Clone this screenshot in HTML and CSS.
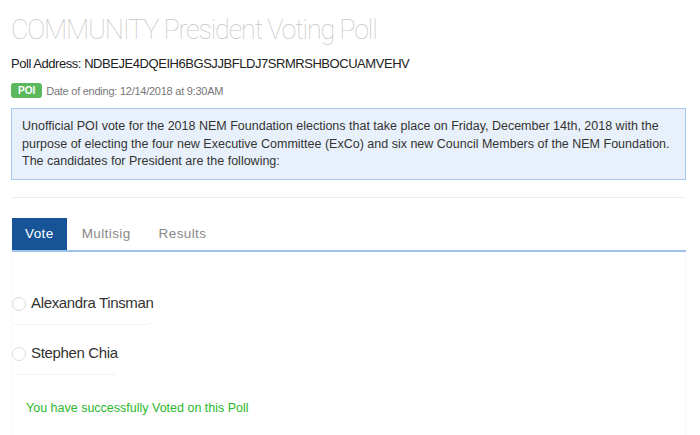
FILE: index.html
```html
<!DOCTYPE html>
<html>
<head>
<meta charset="utf-8">
<link rel="stylesheet" href="styles.css">
</head>
<body>
<div class="page">
  <h1 class="title">COMMUNITY President Voting Poll</h1>
  <p class="address">Poll Address: NDBEJE4DQEIH6BGSJJBFLDJ7SRMRSHBOCUAMVEHV</p>
  <div class="meta"><span class="badge">POI</span><span class="date">Date of ending: 12/14/2018 at 9:30AM</span></div>
  <div class="desc">Unofficial POI vote for the 2018 NEM Foundation elections that take place on Friday, December 14th, 2018 with the purpose of electing the four new Executive Committee (ExCo) and six new Council Members of the NEM Foundation. The candidates for President are the following:</div>
  <hr class="sep">
  <div class="tabs">
    <span class="tab active">Vote</span>
    <span class="tab">Multisig</span>
    <span class="tab">Results</span>
  </div>
  <div class="panel">
    <div class="options">
      <label class="option"><span class="radio"></span>Alexandra Tinsman</label>
      <label class="option"><span class="radio"></span>Stephen Chia</label>
    </div>
    <p class="success">You have successfully Voted on this Poll</p>
  </div>
</div>
</body>
</html>
```
FILE: styles.css
```css
* { box-sizing: border-box; }
html, body { margin: 0; padding: 0; background: #fff; }
body { font-family: "Liberation Sans", Arial, sans-serif; color: #333; }
.page { padding: 0 14px 0 11px; }
.title {
  margin: 0;
  padding-top: 12px;
  font-family: Roboto, "Liberation Sans", sans-serif;
  font-weight: 100;
  font-size: 27px;
  line-height: 36px;
  color: #c8c8c8;
  letter-spacing: -1.2px;
}
.address { margin: 8px 0 0; font-size: 13px; line-height: 16px; color: #222; letter-spacing: -0.45px; }
.meta { display: flex; align-items: center; margin-top: 11px; height: 15px; }
.badge {
  background: #5cb85c;
  color: #fff;
  font-weight: bold;
  font-size: 10px;
  line-height: 15px;
  padding: 0 7px;
  border-radius: 3px;
}
.date { margin-left: 4px; font-size: 11px; color: #777; letter-spacing: -0.25px; }
.desc {
  margin-top: 10px;
  background: #e8f1fb;
  border: 1px solid #a4c8f0;
  padding: 9px 10px 8px 10px;
  font-size: 12.5px;
  line-height: 17.5px;
  color: #333;
}
.sep { margin: 17px 0 20px; border: 0; border-top: 1px solid #eee; }
.tabs { display: flex; border-bottom: 2px solid #9dc3ec; height: 34px; margin-left: 1px; }
.tab {
  font-size: 13.5px;
  color: #888;
  padding: 0 13px;
  line-height: 32px;
  letter-spacing: 0.4px;
  margin-right: 2px;
}
.tab.active { background: #165497; color: #fff; }
.panel {
  border-left: 1px solid #f7f7f7;
  border-right: 1px solid #f7f7f7;
  height: 200px;
  padding-top: 42px;
}
.options { display: flex; flex-direction: column; align-items: flex-start; gap: 19px; }
.option {
  display: flex;
  align-items: center;
  font-size: 15px;
  letter-spacing: -0.35px;
  color: #333;
  padding: 0 0 13px;
  border-bottom: 1px solid #f2f2f2;
  border-radius: 0 0 6px 6px;
}
.radio {
  width: 14px; height: 14px;
  border: 1px solid #ddd;
  border-radius: 50%;
  margin-right: 5px;
  margin-top: 3px;
}
.success { margin: 26px 0 0 14px; color: #2db82d; font-size: 12.5px; }
```
